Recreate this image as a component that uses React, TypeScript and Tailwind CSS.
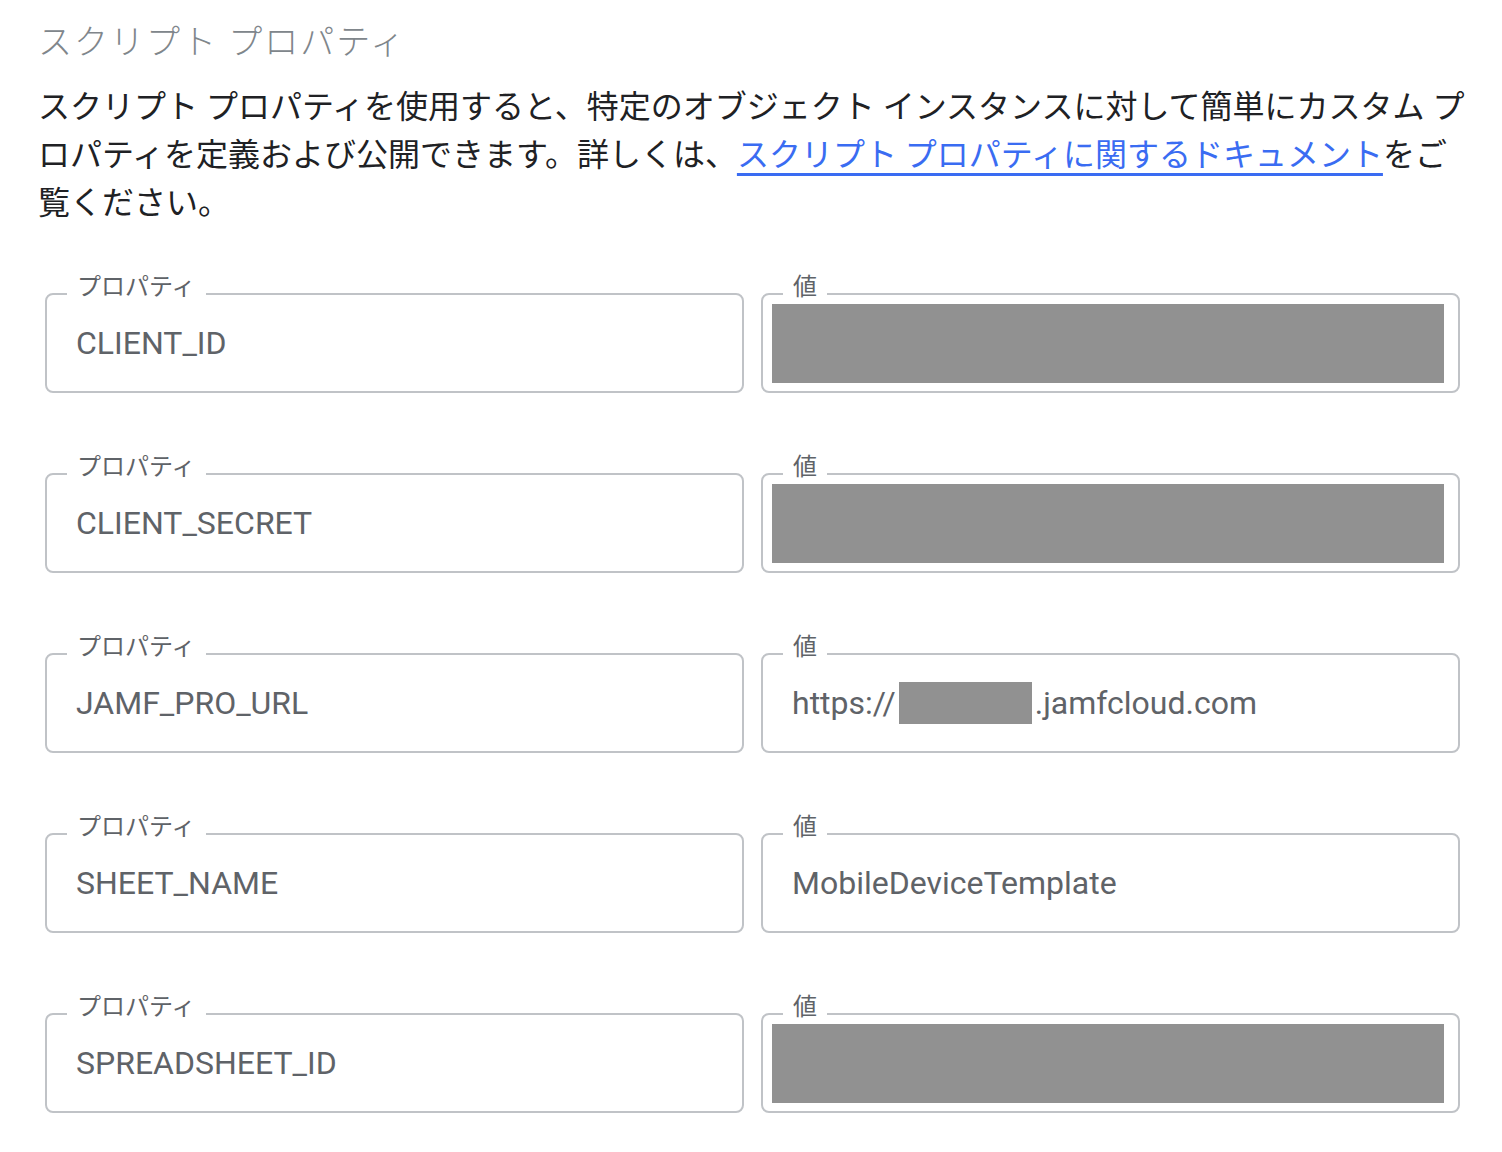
import React from "react";

const FONT = { fontFamily: 'Roboto, "Noto Sans CJK JP", sans-serif' };

function Field({
  label,
  children,
  padded = true,
}: {
  label: string;
  children: React.ReactNode;
  padded?: boolean;
}) {
  return (
    <div className="relative h-[100px] rounded-[8px] border-2 border-[#c0c3c7] bg-white">
      <span className="absolute left-[20px] top-[-20px] bg-white px-[10px] text-[24px] leading-[24px] text-[#5f6368]">
        {label}
      </span>
      {padded ? (
        <div className="flex h-full items-center pl-[29px] text-[32px] text-[#5f6368]">{children}</div>
      ) : (
        <div className="h-full pb-[8px] pl-[9px] pr-[14px] pt-[9px]">{children}</div>
      )}
    </div>
  );
}

function Redacted() {
  return <div className="h-full w-full bg-[#919191]" />;
}

export default function App() {
  const rows: { key: string; value: React.ReactNode | null }[] = [
    { key: "CLIENT_ID", value: null },
    { key: "CLIENT_SECRET", value: null },
    {
      key: "JAMF_PRO_URL",
      value: (
        <span className="flex items-center">
          https://
          <span className="mx-[3px] inline-block h-[42px] w-[133px] bg-[#919191]" />
          .jamfcloud.com
        </span>
      ),
    },
    { key: "SHEET_NAME", value: "MobileDeviceTemplate" },
    { key: "SPREADSHEET_ID", value: null },
  ];

  return (
    <div className="min-h-[1152px] w-[1502px] bg-white pl-[38px] pt-[18px]" style={FONT}>
      <h1 className="text-[34px] font-light leading-[48px] tracking-[2px] text-[#80868b]">
        スクリプト プロパティ
      </h1>
      <p className="mt-[17px] w-[1436px] text-[32px] leading-[48px] text-[#202124]">
        スクリプト プロパティを使用すると、特定のオブジェクト インスタンスに対して簡単にカスタム プロパティを定義および公開できます。詳しくは、
        <a href="#" className="text-[#3a6cf2] underline decoration-[3px] underline-offset-[7px]">
          スクリプト プロパティに関するドキュメント
        </a>
        をご覧ください。
      </p>
      <div className="ml-[7px] mt-[66px] flex w-[1415px] flex-col gap-[80px]">
        {rows.map((r) => (
          <div key={r.key} className="grid grid-cols-2 gap-[17px]">
            <Field label="プロパティ">{r.key}</Field>
            {r.value === null ? (
              <Field label="値" padded={false}>
                <Redacted />
              </Field>
            ) : (
              <Field label="値">{r.value}</Field>
            )}
          </div>
        ))}
      </div>
    </div>
  );
}
